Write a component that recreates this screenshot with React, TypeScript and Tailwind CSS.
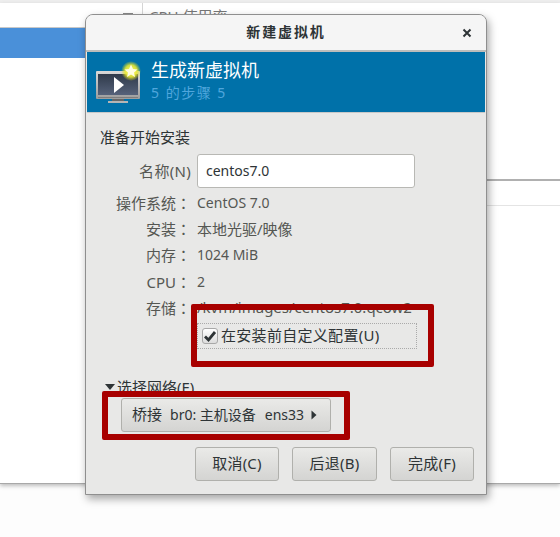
import React from "react";

const font = { fontFamily: '"Noto Sans", "Noto Sans CJK SC", sans-serif' };

function VmIcon() {
  return (
    <svg width="46" height="42" viewBox="0 0 46 42" className="shrink-0">
      <defs>
        <linearGradient id="scr" x1="0" y1="0" x2="0" y2="1">
          <stop offset="0" stopColor="#2f3a4a" />
          <stop offset="1" stopColor="#56627a" />
        </linearGradient>
        <linearGradient id="frm" x1="0" y1="0" x2="0" y2="1">
          <stop offset="0" stopColor="#d8d8d8" />
          <stop offset="1" stopColor="#9c9c9c" />
        </linearGradient>
        <radialGradient id="glow">
          <stop offset="0" stopColor="#ffff70" />
          <stop offset="0.6" stopColor="#e8e830" stopOpacity="0.9" />
          <stop offset="1" stopColor="#d8d820" stopOpacity="0" />
        </radialGradient>
      </defs>
      <rect x="1" y="10" width="44" height="28" rx="1" fill="url(#frm)" />
      <rect x="3" y="13" width="40" height="21" fill="url(#scr)" />
      <rect x="3" y="36" width="40" height="1" fill="#7d7d7d" />
      <rect x="17" y="38" width="12" height="2" fill="#666" />
      <rect x="13" y="40" width="20" height="2" fill="#b5b5b5" />
      <path d="M19 16 L19 32 L29 24 Z" fill="#fff" />
      <circle cx="36" cy="10" r="10" fill="url(#glow)" />
      <path d="M36 3.5 L38 8 L42.5 8.5 L39 11.5 L40 16 L36 13.5 L32 16 L33 11.5 L29.5 8.5 L34 8 Z" fill="#fffde0" />
    </svg>
  );
}

function InfoRow({ label, value, small = false }: { label: string; value: string; small?: boolean }) {
  return (
    <div className="flex h-[26.2px] items-center">
      <div className="w-[91px] shrink-0 text-right text-[#555753] whitespace-nowrap">
        {label}
        <span className="font-['Noto_Sans_CJK_TC']">：</span>
      </div>
      <div className={`ml-[6px] text-[#555753] whitespace-nowrap ${small ? "text-[14px]" : ""}`}>{value}</div>
    </div>
  );
}

function FootButton({ label, className = "" }: { label: string; className?: string }) {
  return (
    <div className={`flex h-[34px] items-center justify-center rounded-[3px] border border-[#b0b0ac] bg-gradient-to-b from-[#eaeae8] to-[#d4d4d2] tracking-[0.2px] text-[#2e3436] ${className}`}>
      {label}
    </div>
  );
}

export default function App() {
  return (
    <div className="relative h-[537px] w-[560px] overflow-hidden bg-[#fdfdfd] text-[15px] leading-none" style={font}>
      <div className="h-[3px] bg-[#eeeeee]" />
      <div className="flex h-[481px] border-b border-[#a8a8a8] bg-white shadow-[0_2px_4px_rgba(0,0,0,0.25)]">
        <div className="w-[143px] shrink-0 border-r border-[#d5d5d5]">
          <div className="relative h-[25px] border-b border-[#c8c8c8]">
            <div className="absolute left-[123px] top-[10px] h-[1px] w-[10px] bg-[#888]" />
          </div>
          <div className="h-[30px] bg-[#4a90d9]" />
        </div>
        <div className="flex-1">
          <div className="h-[25px] pl-[6px] pt-[6px] text-[#777] whitespace-nowrap">CPU 使用率</div>
          <div className="h-[153px] border-b-2 border-[#b0b0b0]" />
          <div className="h-[25px] border-b border-[#e4e4e4]" />
        </div>
      </div>

      <div className="absolute left-[85px] top-[14px] flex h-[481px] w-[402px] flex-col overflow-hidden rounded-t-[8px] border border-[#8f8f8f] bg-[#e8e8e7] shadow-[2px_4px_8px_rgba(0,0,0,0.35)]">
        <div className="relative flex h-[37px] shrink-0 items-center justify-center border-b-2 border-[#bdbdbb] bg-[#f5f5f5] pb-[2px] text-[14px] font-bold tracking-[1.9px] text-[#2e3436]">
          新建虚拟机
          <svg width="10" height="10" viewBox="0 0 10 10" className="absolute left-[376px] top-[13px]">
            <path d="M1.5 1.5 L8.5 8.5 M8.5 1.5 L1.5 8.5" stroke="#2e3436" strokeWidth="2" />
          </svg>
        </div>
        <div className="mx-px flex h-[61px] shrink-0 items-center border-b border-[#c8c8c8] bg-[#0071a9] pl-[8px]">
          <VmIcon />
          <div className="mb-[4px] ml-[10px] flex flex-col">
            <div className="text-[18px] text-white">生成新虚拟机</div>
            <div className="mt-[7px] whitespace-nowrap text-[14px] tracking-[1.5px] text-[#4fa6dc]">5 的步骤 5</div>
          </div>
        </div>
        <div className="relative flex-1 pl-[14px] pt-[17px]">
          <div className="text-[#2e3436]">准备开始安装</div>
          <div className="mt-[9px] flex items-center">
            <div className="w-[91px] shrink-0 text-right tracking-[0.3px] text-[#555753]">名称(N)</div>
            <div className="ml-[6px] flex h-[34px] w-[218px] items-center rounded-[3px] border border-[#b8b8b4] bg-white pl-[8px] text-[14px] text-[#2e3436]">
              centos7.0
            </div>
          </div>
          <div className="mt-[2px]">
            <InfoRow label="操作系统" value="CentOS 7.0" small />
            <InfoRow label="安装" value="本地光驱/映像" />
            <InfoRow label="内存" value="1024 MiB" small />
            <InfoRow label="CPU" value="2" small />
            <InfoRow label="存储" value="/kvm/images/centos7.0.qcow2" />
          </div>
          <div className="ml-[97px] mt-[2px] flex h-[26px] w-[220px] items-center border border-dotted border-[#aaaaaa] pl-[4px] text-[#2e3436]">
            <div className="flex h-[16px] w-[16px] items-center justify-center rounded-[3px] border border-[#a8a8a8] bg-gradient-to-b from-white to-[#dcdcdc]">
              <svg width="14" height="14" viewBox="0 0 14 14">
                <path d="M2 7.5 L5.5 11 L12 3" fill="none" stroke="#2e3436" strokeWidth="2.8" />
              </svg>
            </div>
            <span className="ml-[3px] whitespace-nowrap tracking-[0.3px]">在安装前自定义配置(U)</span>
          </div>
          <div className="mt-[31px] flex items-center text-[#2e3436]">
            <svg width="12" height="8" viewBox="0 0 12 8" className="ml-[4px]">
              <path d="M1 1 L11 1 L6 7 Z" fill="#2e3436" />
            </svg>
            <span className="ml-[1px] whitespace-nowrap">选择网络(E)</span>
          </div>
          <div className="ml-[21px] mt-[3px] flex h-[34px] w-[210px] items-center rounded-[3px] border border-[#b0b0ac] bg-gradient-to-b from-[#eaeae8] to-[#d4d4d2] pl-[10px] whitespace-nowrap text-[#2e3436]">
            <span>桥接</span>
            <span className="ml-[8px] text-[14px]">br0: 主机设备</span>
            <span className="ml-[9px] text-[14px]">ens33</span>
            <svg width="6" height="10" viewBox="0 0 6 10" className="ml-[7px]">
              <path d="M0.5 0.5 L5.5 5 L0.5 9.5 Z" fill="#2e3436" />
            </svg>
          </div>
          <div className="ml-[95px] mt-[15px] flex gap-[13px]">
            <FootButton label="取消(C)" className="w-[84px]" />
            <FootButton label="后退(B)" className="w-[85px]" />
            <FootButton label="完成(F)" className="w-[84px]" />
          </div>
        </div>
      </div>

      <div className="absolute left-[191px] top-[304px] h-[63px] w-[243px] rounded-[2px] border-[6px] border-[#a80000]" />
      <div className="absolute left-[102px] top-[391px] h-[49px] w-[248px] rounded-[2px] border-[6px] border-[#a80000]" />
    </div>
  );
}
